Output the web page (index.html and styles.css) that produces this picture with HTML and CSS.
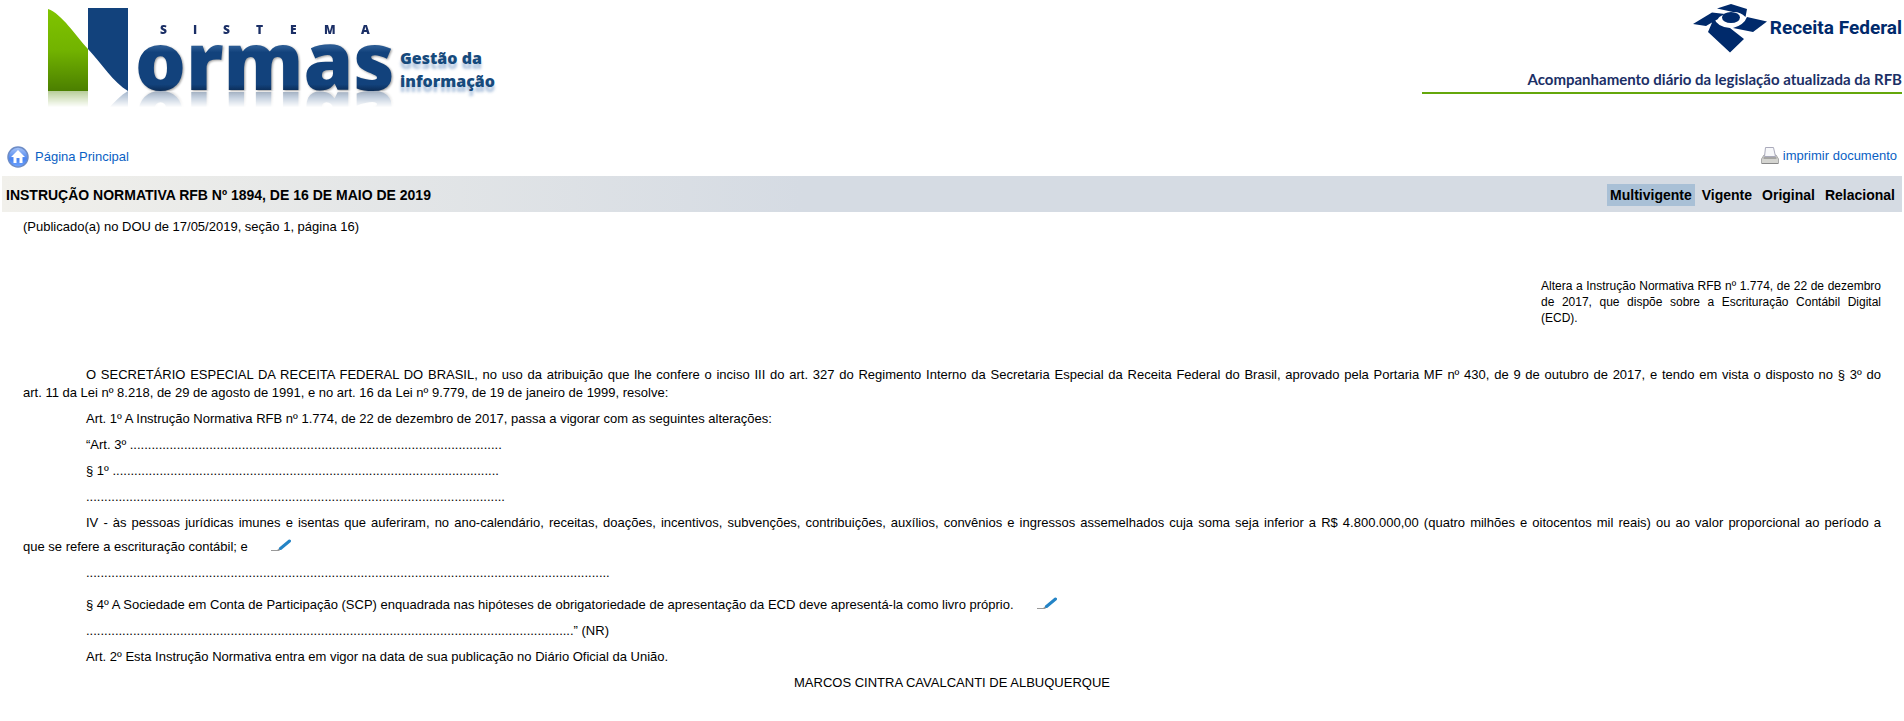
FILE: index.html
```html
<!DOCTYPE html>
<html lang="pt-BR">
<head>
<meta charset="utf-8">
<title>Instrução Normativa RFB nº 1894</title>
<link rel="stylesheet" href="styles.css">
</head>
<body>
<header class="top">
  <div class="brand">
    <svg class="brand-mark" width="396" height="91" viewBox="0 0 396 91" role="img" aria-label="Sistema Normas">
      <defs>
        <linearGradient id="green" x1="0" y1="0" x2="0" y2="1"><stop offset="0" stop-color="#80c400"/><stop offset=".5" stop-color="#72b300"/><stop offset="1" stop-color="#4b7f00"/></linearGradient>
        <linearGradient id="blue" gradientUnits="userSpaceOnUse" x1="0" y1="47" x2="0" y2="91"><stop offset="0" stop-color="#2a5a92"/><stop offset=".12" stop-color="#12427c"/><stop offset=".85" stop-color="#12427c"/><stop offset="1" stop-color="#0b2c56"/></linearGradient>
      </defs>
      <path d="M48 9C62 14 75 35 88 49V91H48Z" fill="url(#green)"/>
      <path d="M88 8H128V91C114 83 101 63 88 49Z" fill="#12427c"/>
      <text class="mark-small" x="160 193 223 256 290 324 361" y="34">SISTEMA</text>
      <text class="mark-big" x="135" y="90" fill="url(#blue)">ormas</text>
    </svg>
    <p class="brand-sub">Gestão da<br>informação</p>
  </div>
  <div class="agency">
    <div class="agency-name">
      <svg width="75" height="50" viewBox="1688 3 75 50" aria-hidden="true" fill="#002a6b">
        <path d="M1688 24L1707 12.500L1720 14Q1713 17 1713 19L1701 26ZM1712 8.500L1726 4L1742 9L1740.500 17Q1735 11.500 1728 12ZM1728 28Q1739 25 1742 17L1762 21.500L1748 32ZM1709 18Q1712 27 1725 28L1739 39L1725 52.500L1703 32Z"/><ellipse cx="1726" cy="17.500" rx="9" ry="5.500"/>
      </svg>
      <span>Receita Federal</span>
    </div>
    <p class="agency-tag">Acompanhamento diário da legislação atualizada da RFB</p>
  </div>
</header>
<nav class="tools">
  <a class="home" href="#"><svg width="22" height="22" viewBox="0 0 22 22" aria-hidden="true"><defs><linearGradient id="disc" x1="0" y1="0" x2="0" y2="1"><stop offset="0" stop-color="#a9c6f8"/><stop offset=".6" stop-color="#4a84f0"/><stop offset="1" stop-color="#6fa4ff"/></linearGradient></defs><circle cx="11" cy="11" r="10" fill="url(#disc)" stroke="#6d8cc6" stroke-width="1.500"/><path d="M11 4L4 11H6.500V17H9.500V12H12.500V17H15.500V11H18Z" fill="#fff"/></svg>Página Principal</a>
  <a class="print" href="#"><svg width="18" height="18" viewBox="0 0 18 18" aria-hidden="true"><path d="M3 8H15L17.500 12V16.500H.5V12Z" fill="#d4d4d0" stroke="#aaa"/><path d="M4.500 .5H12.500L14.500 9.500H3.500Z" fill="#f7f8fa" stroke="#aab"/><path d="M2.500 11H15.500" stroke="#777"/><path d="M1 16.500H17" stroke="#888"/></svg>imprimir documento</a>
</nav>
<main>
  <div class="bar">
    <h1>INSTRUÇÃO NORMATIVA RFB Nº 1894, DE 16 DE MAIO DE 2019</h1>
    <nav class="views"><a class="on" href="#">Multivigente</a><a href="#">Vigente</a><a href="#">Original</a><a href="#">Relacional</a></nav>
  </div>
  <article>
    <p class="pub">(Publicado(a) no DOU de 17/05/2019, seção 1, página 16)</p>
    <p class="ementa">Altera a Instrução Normativa RFB nº 1.774, de 22 de dezembro de 2017, que dispõe sobre a Escrituração Contábil Digital (ECD).</p>
    <p>O SECRETÁRIO ESPECIAL DA RECEITA FEDERAL DO BRASIL, no uso da atribuição que lhe confere o inciso III do art. 327 do Regimento Interno da Secretaria Especial da Receita Federal do Brasil, aprovado pela Portaria MF nº 430, de 9 de outubro de 2017, e tendo em vista o disposto no § 3º do <span class="keep">art. 11 da Lei nº 8.218</span>, de 29 de agosto de 1991, e no art. 16 da Lei nº 9.779, de 19 de janeiro de 1999, resolve:</p>
    <p>Art. 1º A Instrução Normativa RFB nº 1.774, de 22 de dezembro de 2017, passa a vigorar com as seguintes alterações:</p>
    <p>“Art. 3º .......................................................................................................</p>
    <p>§ 1º ...........................................................................................................</p>
    <p>....................................................................................................................</p>
    <p>IV - às pessoas jurídicas imunes e isentas que auferiram, no ano-calendário, receitas, doações, incentivos, subvenções, contribuições, auxílios, convênios e ingressos assemelhados cuja soma seja inferior a R$ 4.800.000,00 (quatro milhões e oitocentos mil reais) ou ao valor proporcional ao período a <span class="keep">que se refere</span> a escrituração contábil; e <a class="note" href="#" aria-label="Anotação"><svg width="20" height="19" viewBox="0 0 20 19" aria-hidden="true"><path d="M0 18.500H8" stroke="#999"/><path d="M7 18.500L10 16" stroke="#999" stroke-width="2"/><path d="M9.500 16.500L18.500 9" stroke="#2484c6" stroke-width="3" stroke-linecap="round"/></svg></a></p>
    <p>.................................................................................................................................................</p>
    <p>§ 4º A Sociedade em Conta de Participação (SCP) enquadrada nas hipóteses de obrigatoriedade de apresentação da ECD deve apresentá-la como livro próprio. <a class="note" href="#" aria-label="Anotação"><svg width="20" height="19" viewBox="0 0 20 19" aria-hidden="true"><path d="M0 18.500H8" stroke="#999"/><path d="M7 18.500L10 16" stroke="#999" stroke-width="2"/><path d="M9.500 16.500L18.500 9" stroke="#2484c6" stroke-width="3" stroke-linecap="round"/></svg></a></p>
    <p>.......................................................................................................................................” (NR)</p>
    <p>Art. 2º Esta Instrução Normativa entra em vigor na data de sua publicação no Diário Oficial da União.</p>
    <p class="sign">MARCOS CINTRA CAVALCANTI DE ALBUQUERQUE</p>
  </article>
</main>
</body>
</html>
```
FILE: styles.css
```css
body { margin: 0 2px; background: #fff; color: #000; font: 13px/18px "Liberation Sans", Arial, sans-serif; }
p, h1 { margin: 0; }
a { color: #0a5fc4; text-decoration: none; }
.top { display: flex; justify-content: space-between; height: 140px; }
.brand { display: flex; margin-left: -2px; }
.brand-mark { -webkit-box-reflect: below 0 linear-gradient(transparent 82%, rgba(0, 0, 0, .4)); }
.mark-small { font: 800 12px "Open Sans", sans-serif; fill: #1b2f66; }
.mark-big { font: 800 80px "Open Sans", sans-serif; filter: drop-shadow(1px 1px 1px rgba(0, 0, 0, .4)); }
.brand-sub { margin: 47px 0 0 4px; font: 800 16px/23px "Open Sans", sans-serif; color: #164a7c; text-shadow: 0 5px 3px rgba(70, 120, 180, .45); }
.agency { width: 480px; text-align: right; color: #002a6b; }
.agency-name { display: flex; justify-content: flex-end; gap: 2px; padding-top: 3px; font: 700 19px/50px Roboto, sans-serif; }
.agency-tag { margin-top: 15px; padding-bottom: 2px; border-bottom: 2px solid #64a70b; font: 700 15px/22px Lato, sans-serif; color: #1b2f66; }
.tools { display: flex; justify-content: space-between; height: 36px; }
.home, .print { display: flex; align-items: center; height: 34px; }
.home { gap: 6px; margin-left: 5px; }
.print { gap: 4px; height: 31px; margin-right: 5px; }
.bar { display: flex; justify-content: space-between; align-items: center; min-height: 35px; padding: 1px 4px 0; background: linear-gradient(90deg, #f1f0eb, #d5dbe3 800px); }
.bar h1 { font-size: 14px; line-height: 18px; }
.views { display: flex; gap: 4px; font-size: 14px; font-weight: 700; }
.views a { padding: 2px 3px; color: #000; }
.views .on { background: #a9c0d6; }
article { padding: 6px 21px 24px; text-align: justify; }
article p { margin-bottom: 8px; text-indent: 63px; }
article .pub { margin-bottom: 42px; text-indent: 0; }
article .ementa { width: 340px; margin: 0 0 40px auto; font-size: 12px; line-height: 16px; text-indent: 0; }
article .sign { text-align: center; text-indent: 0; }
.keep { white-space: nowrap; }
.note { margin-left: 20px; text-indent: 0; }
```
